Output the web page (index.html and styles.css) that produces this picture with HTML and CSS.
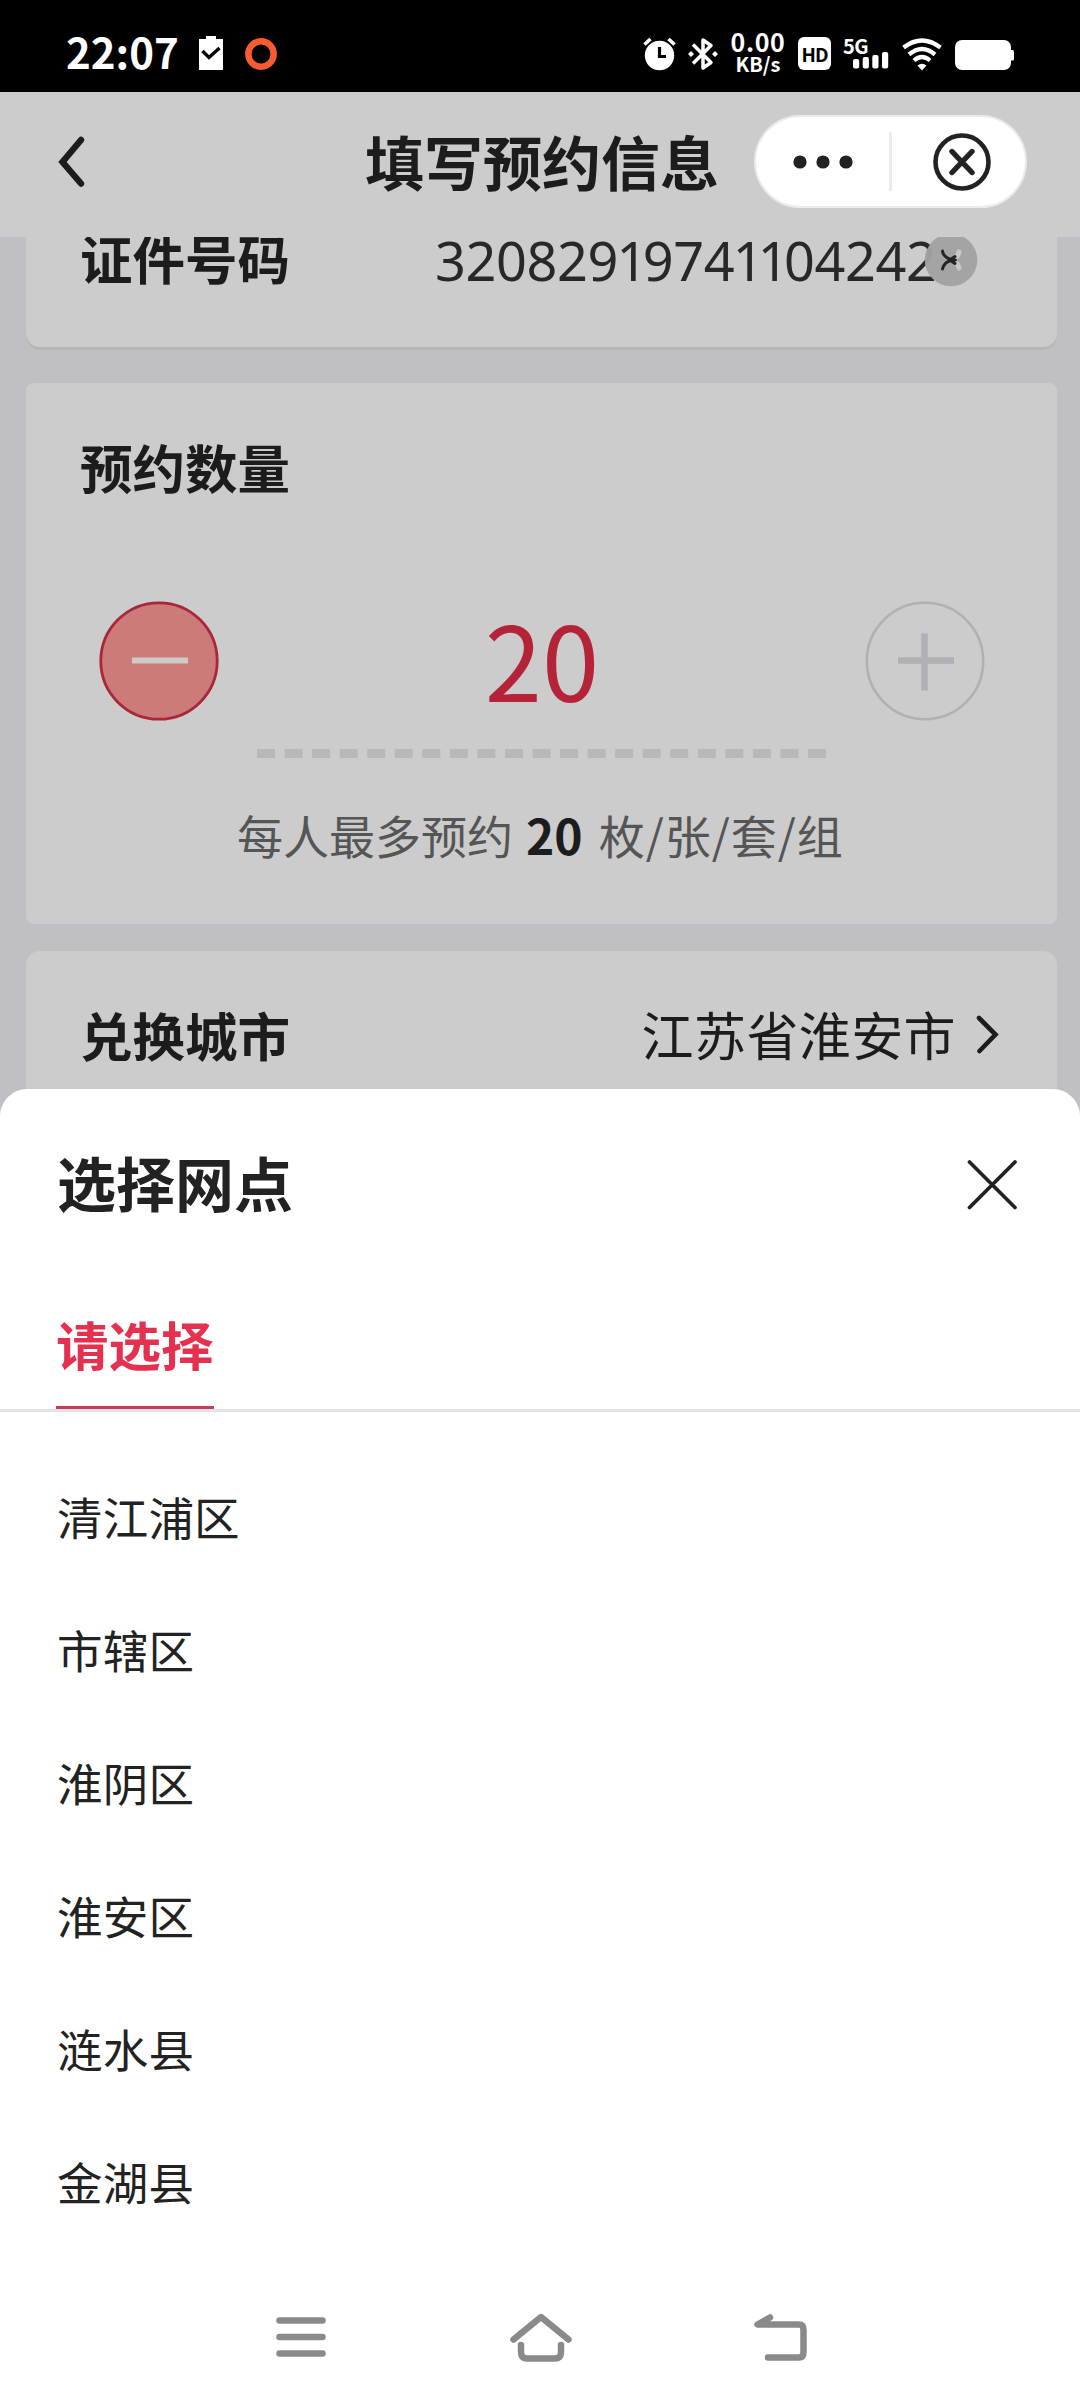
FILE: index.html
```html
<!DOCTYPE html>
<html lang="zh-CN">
<head>
<meta charset="utf-8">
<title>填写预约信息</title>
<link rel="stylesheet" href="styles.css">
</head>
<body>
<div class="screen">
  <div class="status">
    <span class="time">22:07</span>
    <svg class="clip" width="24" height="34" viewBox="0 0 24 34"><path d="M0 3h7V0h10v3h7v31H0z" fill="#fff"/><path d="M3.500 15l6.500 6.500L20.500 12" fill="none" stroke="#000" stroke-width="3.400"/></svg>
    <svg class="ring" width="32" height="32" viewBox="0 0 32 32"><circle cx="16" cy="16" r="12.700" fill="none" stroke="#fc5b30" stroke-width="6.400"/></svg>
    <div class="sys">
      <svg class="alarm" width="33" height="34" viewBox="0 0 33 34"><circle cx="16.500" cy="18.500" r="14.700" fill="#fff"/><path d="M1.500 7.500L7.500 2M31.500 7.500L25.500 2" stroke="#fff" stroke-width="3.600"/><path d="M16.500 10v9.500H23" fill="none" stroke="#000" stroke-width="3.200"/></svg>
      <svg class="bt" width="30" height="34" viewBox="0 0 30 34"><path d="M5 7.500L23 25.500 15 31V3L23 8.500 5 26.500" fill="none" stroke="#fff" stroke-width="3.500" stroke-linejoin="round"/><path d="M3 14l3 3-3 3-3-3zM27 14l3 3-3 3-3-3z" fill="#fff"/></svg>
      <div class="speed"><span class="rate">0.00</span><span class="unit">KB/s</span></div>
      <div class="hd"><span>HD</span></div>
      <div class="cell">
        <span class="gen">5G</span>
        <svg width="36" height="17" viewBox="0 0 36 17"><g fill="#fff"><rect x="0" y="7" width="6.200" height="9.500" rx="2"/><rect x="9.700" y="5" width="6.200" height="11.500" rx="2"/><rect x="19.300" y="3" width="6.200" height="13.500" rx="2"/><rect x="29" y="0" width="6.200" height="16.500" rx="2"/></g></svg>
      </div>
      <svg class="wifi" width="40" height="33" viewBox="0 0 40 33"><g fill="none" stroke="#fff" stroke-width="4.300"><path d="M1.500 9.500Q20-4.500 38.500 9.500"/><path d="M7 16.500Q20 5.500 33 16.500"/><path d="M12 22.500Q20 15.500 28 22.500"/></g><path d="M15.500 27.500Q20 24 24.500 27.500L20 32.500z" fill="#fff"/></svg>
      <svg class="battery" width="60" height="30" viewBox="0 0 60 30"><rect width="56" height="30" rx="7" fill="#fff"/><rect x="54" y="10" width="5" height="10.500" rx="1.500" fill="#fff"/></svg>
    </div>
  </div>

  <header class="header">
    <svg class="back" width="30" height="54" viewBox="0 0 30 54"><path d="M25 5L6.500 27 25 48.500" fill="none" stroke="#1c1c1c" stroke-width="6.400" stroke-linecap="round"/></svg>
    <h1>填写预约信息</h1>
    <div class="capsule">
      <svg class="more" width="60" height="14" viewBox="0 0 60 14"><g fill="#222"><circle cx="7" cy="7" r="6.600"/><circle cx="30" cy="7" r="6.600"/><circle cx="53" cy="7" r="6.600"/></g></svg>
      <i class="split"></i>
      <svg class="exit" width="58" height="58" viewBox="0 0 58 58"><circle cx="29" cy="29" r="26.500" fill="none" stroke="#222" stroke-width="4.600"/><path d="M19 18.500L39 39.500M39 18.500L19 39.500" stroke="#222" stroke-width="5.400" stroke-linecap="round"/></svg>
    </div>
  </header>

  <main class="page">
    <section class="card card-id">
      <b class="label">证件号码</b>
      <div class="idno">320829<i>1</i>974<i>1</i><i>1</i>04242
        <svg class="clear" width="54" height="50" viewBox="0 0 54 50"><circle cx="27" cy="23" r="26.300" fill="#a2a2a2" fill-opacity=".96"/><path d="M28 22.500q6-2 7-7.500M28 23.500q6 2 7 7.500" fill="none" stroke="#c8c8c8" stroke-width="5" stroke-linecap="round"/><path d="M18.500 14q.5 6 9.500 9-8 2-9.500 9M26 23h5.500M27 22l4-2.500M27 24l4 2.500" fill="none" stroke="#242424" stroke-width="3" stroke-linecap="round"/></svg>
      </div>
    </section>

    <section class="card card-qty">
      <b class="label">预约数量</b>
      <div class="stepper">
        <svg width="120" height="120" viewBox="0 0 120 120"><circle cx="60" cy="60" r="58.200" fill="#cc7b79" stroke="#a9263b" stroke-width="2.800"/><path d="M33 59.500h56" stroke="#d0cac6" stroke-width="6"/></svg>
        <span class="num">20</span>
        <svg width="120" height="120" viewBox="0 0 120 120"><circle cx="60" cy="60" r="58.200" fill="none" stroke="#b0b0b5" stroke-width="2.600"/><path d="M33 59.500h56M59.500 32.500v57" stroke="#b0b0b5" stroke-width="6.500"/></svg>
      </div>
      <svg class="dashes" width="570" height="9" viewBox="0 0 570 9"><path d="M0 4.500h570" stroke="#b8b8b8" stroke-width="9" stroke-dasharray="18 9.550"/></svg>
      <p class="limit"><span>每人最多预约</span><b>20</b><span class="units">枚/张/套/组</span></p>
    </section>

    <section class="card card-city">
      <b class="label">兑换城市</b>
      <div class="city">江苏省淮安市<svg width="24" height="40" viewBox="0 0 24 40"><path d="M4 4L20.500 20.500 4.500 37" fill="none" stroke="#1c1c1c" stroke-width="4.600" stroke-linecap="round"/></svg></div>
    </section>
  </main>

  <div class="sheet">
    <div class="sheet-head">
      <h2>选择网点</h2>
      <svg width="52" height="52" viewBox="0 0 52 52"><path d="M3.500 4L49 49.500M49 4L3.500 49.500" stroke="#222" stroke-width="3.700" stroke-linecap="round"/></svg>
    </div>
    <div class="tabs"><span class="tab">请选择</span></div>
    <ul class="list">
      <li>清江浦区</li>
      <li>市辖区</li>
      <li>淮阴区</li>
      <li>淮安区</li>
      <li>涟水县</li>
      <li>金湖县</li>
    </ul>
    <nav class="nav">
      <svg width="50" height="46" viewBox="0 0 50 46"><path d="M3.500 6.500h43M3.500 23h43M3.500 39.500h43"/></svg>
      <svg width="64" height="50" viewBox="0 0 64 50"><path d="M4.500 27.500L32 5 59.500 27.500M12 33v7q0 6.500 6 6.500h28q6 0 6-6.500v-7"/></svg>
      <svg width="54" height="48" viewBox="0 0 54 48"><path d="M16 4.500L3.500 11.500H45q4.500 0 4.500 5.500v22q0 5.500-4.500 5.500H14"/></svg>
    </nav>
  </div>
</div>
</body>
</html>
```
FILE: styles.css
```css
* { box-sizing: border-box; }
body, h1, h2, p, ul { margin: 0; padding: 0; }
body { font-family: "Noto Sans CJK SC", "Noto Sans", sans-serif; color: #1c1c1c; }
svg { display: block; flex: none; }
.screen { position: relative; width: 1080px; height: 2400px; overflow: hidden; background: #bfbfc4; display: flex; flex-direction: column; }

.status { height: 92px; background: #000; color: #fff; display: flex; align-items: flex-start; padding-left: 66px; }
.time { width: 133px; font-size: 42px; font-weight: 700; line-height: 62px; padding-top: 20px; }
.clip { margin-top: 36px; }
.ring { margin: 38px 0 0 22px; }
.sys { display: flex; margin-left: auto; padding-right: 65px; }
.alarm { margin-top: 37px; }
.bt { margin: 37px 0 0 12px; }
.speed { width: 56px; margin: 28px 0 0 12px; display: flex; flex-direction: column; align-items: center; font-weight: 700; white-space: nowrap; }
.rate { font-size: 25px; line-height: 26px; letter-spacing: .6px; }
.unit { font-size: 20px; line-height: 20px; }
.hd { width: 33px; height: 33px; margin: 37px 0 0 12px; border-radius: 6px; background: #fff; color: #000; display: flex; align-items: center; justify-content: center; font-size: 19px; font-weight: 700; line-height: 33px; letter-spacing: -1px; }
.cell { margin: 37px 0 0 12px; width: 47px; }
.gen { display: block; font-size: 20px; line-height: 17px; height: 15px; font-weight: 700; letter-spacing: -.5px; }
.cell svg { margin-left: 10px; }
.wifi { margin: 38px 0 0 12px; }
.battery { margin: 40px 0 0 13px; }

.header { position: relative; z-index: 1; height: 145px; background: #ccc; display: flex; align-items: center; padding: 0 53px 6px 56px; }
.header h1 { width: 354px; margin-left: 279px; padding-bottom: 1px; font-size: 59px; font-weight: 700; line-height: 80px; white-space: nowrap; }
.capsule { width: 273px; height: 93px; margin-left: auto; border: 2px solid #ebebeb; border-radius: 47px; background: #fff; display: flex; align-items: center; }
.more { margin-left: 37px; }
.split { width: 3px; height: 59px; margin-left: 36px; background: #ebebeb; }
.exit { margin-left: 41px; }

.page { padding: 0 23px 0 26px; }
.card { background: #ccc; }
.label { font-size: 52.500px; font-weight: 700; line-height: 70px; white-space: nowrap; }
.card-id { height: 110px; margin-bottom: 36px; border-radius: 0 0 14px 14px; box-shadow: 0 3px 0 #b7b7b4; padding: 0 79px 0 54px; display: flex; justify-content: space-between; }
.card-id .label { margin-top: -15px; }
.idno { position: relative; width: 543px; height: 70px; margin-top: -12px; font: 400 54px/70px "Noto Sans", sans-serif; letter-spacing: -.4px; color: #282828; white-space: nowrap; }
.idno i { font-style: normal; letter-spacing: -4.500px; margin-left: -1.500px; }
.clear { position: absolute; left: 489px; top: 12px; }
.card-qty { height: 541px; margin-bottom: 27px; border-radius: 8px; padding: 48px 72px 0 54px; display: flex; flex-direction: column; }
.stepper { display: flex; justify-content: space-between; align-items: center; margin: 100px 0 0 19px; height: 120px; }
.num { font-size: 103px; line-height: 120px; padding-bottom: 6px; color: #b52339; }
.dashes { margin: 28px 0 0 177px; }
.limit { display: flex; margin: 45px 0 0 157px; font-size: 46px; line-height: 62px; color: #555; white-space: nowrap; }
.limit b { margin: 0 16px 0 13px; color: #1c1c1c; font-size: 48px; }
.units { letter-spacing: 1px; }
.card-city { height: 200px; border-radius: 14px; padding: 48px 58px 0 54px; display: flex; justify-content: space-between; }
.city { display: flex; height: 70px; align-items: center; font-size: 52px; line-height: 70px; letter-spacing: .4px; }
.city svg { margin-left: 19px; }

.sheet { position: absolute; left: 0; top: 1089px; width: 1080px; height: 1311px; border-radius: 27px 27px 0 0; background: #fff; color: #222; display: flex; flex-direction: column; }
.sheet-head { height: 190px; padding: 0 62px 0 57px; display: flex; align-items: center; justify-content: space-between; }
.sheet-head h2 { padding-bottom: 5px; font-size: 59px; font-weight: 700; line-height: 80px; }
.tabs { height: 133px; border-bottom: 3px solid #e2e2e2; padding-left: 56px; display: flex; align-items: flex-end; }
.tab { height: 110px; padding-top: 6px; border-bottom: 3px solid #cb3c57; color: #e4314f; font-size: 52.500px; font-weight: 700; line-height: 76px; }
.list { list-style: none; padding: 38px 0 0 57px; }
.list li { height: 133px; font-size: 45.500px; line-height: 133px; letter-spacing: .2px; }
.nav { margin-top: auto; height: 109px; display: flex; align-items: center; padding: 0 0 18px 276px; }
.nav svg { fill: none; stroke: #8a8a8a; stroke-width: 6.500px; stroke-linecap: round; stroke-linejoin: round; }
.nav svg + svg { margin-left: 183px; }
.nav svg:last-child { margin-left: 181px; }
```
